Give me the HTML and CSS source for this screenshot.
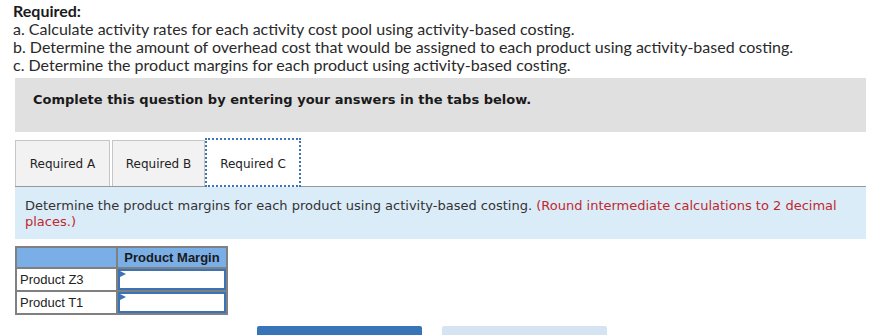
FILE: index.html
```html
<!DOCTYPE html>
<html lang="en">
<head>
    <meta charset="UTF-8">
    <title>Required C</title>
    <link rel="stylesheet" href="styles.css">
</head>
<body>
    <div class="question">
        <p class="req-title">Required:</p>
        <p>a. Calculate activity rates for each activity cost pool using activity-based costing.</p>
        <p>b. Determine the amount of overhead cost that would be assigned to each product using activity-based costing.</p>
        <p>c. Determine the product margins for each product using activity-based costing.</p>
    </div>

    <div class="panel">
        <div class="notice">Complete this question by entering your answers in the tabs below.</div>

        <div class="tabs">
            <div class="tab">Required A</div>
            <div class="tab">Required B</div>
            <div class="tab active">Required C</div>
        </div>

        <div class="instructions">
            Determine the product margins for each product using activity-based costing. <span class="hint">(Round intermediate calculations to 2 decimal places.)</span>
        </div>

        <table class="answer">
            <colgroup>
                <col class="col-label">
                <col class="col-value">
            </colgroup>
            <tr>
                <th></th>
                <th>Product Margin</th>
            </tr>
            <tr>
                <td class="label">Product Z3</td>
                <td class="cell"><div class="input"></div></td>
            </tr>
            <tr>
                <td class="label">Product T1</td>
                <td class="cell"><div class="input"></div></td>
            </tr>
        </table>

        <div class="nav">
            <button class="nav-btn prev"></button>
            <button class="nav-btn next"></button>
        </div>
    </div>
</body>
</html>
```

FILE: styles.css
```css
body {
    margin: 0;
    padding: 0 3px 0 15px;
    background: #fff;
    overflow: hidden;
}
.question {
    font-family: Lato, 'Noto Sans', sans-serif;
    font-size: 16px;
    line-height: 18px;
    color: #2a2a2a;
    margin: 0 0 0 -2px;
    padding-top: 2px;
}
.question p {
    margin: 0;
}
.req-title {
    font-weight: bold;
    color: #1a1a1a;
}
.panel {
    margin-top: 4px;
}
.notice {
    background: #e0e0e0;
    font-family: 'DejaVu Sans', Verdana, sans-serif;
    font-size: 13px;
    font-weight: bold;
    color: #1a1a1a;
    height: 54px;
    padding: 14px 0 0 18px;
    box-sizing: border-box;
}
.tabs {
    display: flex;
    align-items: flex-end;
    margin-top: 6px;
    border-bottom: 1px solid #999;
    height: 48px;
}
.tab {
    font-family: 'DejaVu Sans', Verdana, sans-serif;
    font-size: 12px;
    color: #222;
    background: #f2f2f2;
    border: 1px solid #c6c6c6;
    border-bottom: none;
    height: 46px;
    box-sizing: border-box;
    padding: 16px 0 0;
    text-align: center;
    width: 95px;
    margin-right: 2px;
}
.tab:nth-child(2) {
    width: 93px;
    margin-right: 0;
}
.tab.active {
    background: #fff;
    border: 2px dotted #3f72b5;
    height: 49px;
    margin-bottom: -1px;
    width: 96px;
    padding-top: 17px;
}
.instructions {
    background: #dbecf9;
    font-family: 'DejaVu Sans', Verdana, sans-serif;
    font-size: 13px;
    line-height: 16px;
    color: #333;
    padding: 11px 20px 9px 10px;
}
.hint {
    color: #c0282d;
}
.answer {
    border-collapse: collapse;
    table-layout: fixed;
    width: 211px;
    margin-top: 7px;
    font-family: 'Liberation Sans', Arial, sans-serif;
    font-size: 13px;
}
.col-label {
    width: 101px;
}
.col-value {
    width: 110px;
}
.answer th, .answer td {
    border: 2px solid #808080;
    padding: 0;
    height: 21px;
    box-sizing: border-box;
}
.answer th {
    background: #7aaee6;
    color: #1a1a1a;
    font-size: 13px;
    font-weight: bold;
    padding: 0;
}
.label {
    color: #222;
    padding: 0 3px !important;
    vertical-align: middle;
}
.input {
    height: 17px;
    border: 2px solid #3a73b8;
    position: relative;
}
.input::before {
    content: "";
    position: absolute;
    left: 0;
    top: 0;
    border-left: 6px solid #3a73b8;
    border-top: 3px solid transparent;
    border-bottom: 3px solid transparent;
}
.nav {
    display: flex;
    gap: 20px;
    margin: 11px 0 0 242px;
}
.nav-btn {
    width: 165px;
    height: 30px;
    border: none;
    border-radius: 2px;
    padding: 0;
}
.prev {
    background: #3874b8;
}
.next {
    background: #d6e3f2;
}
```
